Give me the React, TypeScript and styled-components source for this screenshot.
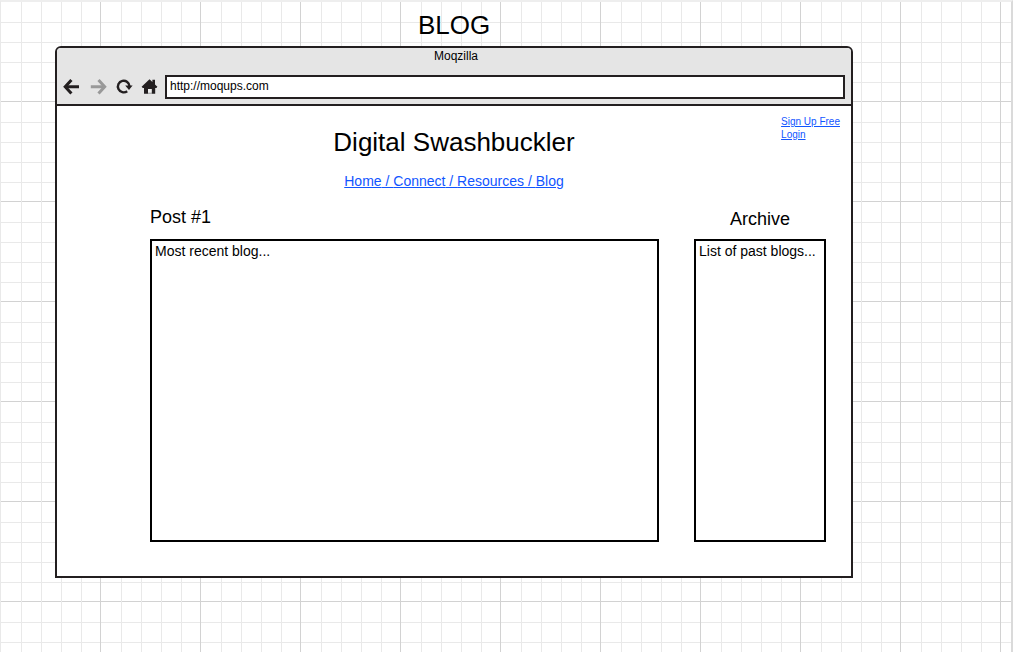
import React from "react";
import styled, { createGlobalStyle } from "styled-components";

const ink = "#231f20";
const minor = "#e9e9e9";
const major = "#d2d2d2";
const stops = `${major} 0 1px, transparent 1px 21px, ${minor} 21px 22px, transparent 22px 41px, ${minor} 41px 42px, transparent 42px 61px, ${minor} 61px 62px, transparent 62px 81px, ${minor} 81px 82px, transparent 82px 100px`;

const GlobalStyle = createGlobalStyle`
  *, *::before, *::after { box-sizing: border-box; }
  body {
    margin: 0;
    background: #fff;
    color: #000;
    font-family: "Liberation Sans", Arial, Helvetica, sans-serif;
  }
`;

const Canvas = styled.div`
  min-height: 100vh;
  padding: 8px 158px 74px 54px;
  border-top: 2px solid #eeeeee;
  border-left: 1px solid ${minor};
  border-right: 2px solid #dadada;
  background-image: linear-gradient(to right, ${stops}), linear-gradient(to bottom, ${stops});
  background-size: 100px 100px;
  background-position: 0 1px;
  background-origin: border-box;
`;

const PageLabel = styled.h1`
  margin: 0 0 6px;
  font-size: 26px;
  line-height: 30px;
  font-weight: 400;
  text-align: center;
`;

const BrowserWindow = styled.div`
  border: 2px solid ${ink};
  border-radius: 6px 6px 0 0;
  background: #fff;
  overflow: hidden;
`;

const Chrome = styled.div`
  padding: 1px 6px 5px;
  border-bottom: 2px solid ${ink};
  background: #e5e5e5;
`;

const WindowTitle = styled.div`
  margin-bottom: 12px;
  font-size: 12px;
  line-height: 14px;
  text-align: center;
  padding-left: 4px;
`;

const Toolbar = styled.div`
  display: flex;
  align-items: center;
  gap: 8px;
`;

const ToolButton = styled.button<{ $dim?: boolean }>`
  flex: none;
  width: 18px;
  height: 18px;
  padding: 0;
  border: 0;
  background: none;
  color: ${(p) => (p.$dim ? "#999999" : ink)};

  svg {
    display: block;
  }
`;

const Address = styled.input`
  flex: 1;
  min-width: 0;
  height: 24px;
  margin-left: -2px;
  padding: 0 3px 2px;
  border: 2px solid ${ink};
  border-radius: 0;
  background: #fff;
  color: #000;
  font: 12px/14px "Liberation Sans", Arial, Helvetica, sans-serif;
  outline: none;
`;

const SiteHeader = styled.header`
  display: grid;
  grid-template-columns: 1fr auto 1fr;
  padding: 9px 11px 18px;
`;

const Masthead = styled.div`
  grid-column: 2;
  margin-top: 12px;
  text-align: center;
`;

const SiteTitle = styled.h2`
  margin: 0 0 16px;
  font-size: 26px;
  line-height: 30px;
  font-weight: 400;
`;

const SiteNav = styled.nav`
  color: #1155ff;
  font-size: 14px;
  line-height: 16px;
  text-decoration: underline;
`;

const NavLink = styled.a`
  color: inherit;
  text-decoration: none;
`;

const Account = styled.div`
  justify-self: end;
  display: flex;
  flex-direction: column;
  align-items: flex-start;
`;

const AccountLink = styled.a`
  color: #1155ff;
  font-size: 10px;
  line-height: 13px;
`;

const Columns = styled.main`
  display: grid;
  grid-template-columns: 1fr 132px;
  align-items: end;
  gap: 35px;
  padding: 0 25px 34px 93px;
`;

const SectionTitle = styled.h3<{ $centered?: boolean }>`
  margin: 0 0 ${(p) => (p.$centered ? 10 : 12)}px;
  font-size: 18px;
  line-height: 20px;
  font-weight: 400;
  text-align: ${(p) => (p.$centered ? "center" : "left")};
`;

const Panel = styled.div`
  min-height: 303px;
  padding: 2px 3px;
  border: 2px solid #000;
  font-size: 14px;
  line-height: 16px;
`;

const navItems = ["Home", "Connect", "Resources", "Blog"];

const BackIcon = () => (
  <svg width="18" height="18" viewBox="0 0 18 18" fill="none" stroke="currentColor" strokeWidth="3">
    <path d="M16 8.8H2.8" />
    <path d="M8.4 2 2.2 8.8l6.2 6.8" />
  </svg>
);

const ForwardIcon = () => (
  <svg width="18" height="18" viewBox="0 0 18 18" fill="none" stroke="currentColor" strokeWidth="3">
    <path d="M1.8 8.8h13.4" />
    <path d="m9.5 2 6.2 6.8-6.2 6.8" />
  </svg>
);

const ReloadIcon = () => (
  <svg width="18" height="18" viewBox="0 0 18 18" fill="none" stroke="currentColor" strokeWidth="2.4">
    <path d="M12.2 13.2A5.8 5.8 0 1 1 14.5 8.4" />
    <path d="M10.2 7.6h7.4L14 12z" fill="currentColor" stroke="none" />
  </svg>
);

const HomeIcon = () => (
  <svg width="18" height="18" viewBox="0 0 18 18" fill="currentColor">
    <path d="M8.5 1.3 11.4 4V1.8h2.6v4.6L16.4 8.7 15.4 9.9H14.2V15.8H10.6V11H7V15.8H3V9.9H1.8L.6 8.7z" />
    <path d="M7 14.6h3.6v1.2H7z" fill="#999999" />
    <path d="M7 11h3.6v3.6H7z" fill="#eeeeee" />
  </svg>
);

export default function App() {
  return (
    <>
      <GlobalStyle />
      <Canvas>
        <PageLabel>BLOG</PageLabel>
        <BrowserWindow>
          <Chrome>
            <WindowTitle>Moqzilla</WindowTitle>
            <Toolbar>
              <ToolButton type="button" aria-label="Back">
                <BackIcon />
              </ToolButton>
              <ToolButton type="button" aria-label="Forward" $dim>
                <ForwardIcon />
              </ToolButton>
              <ToolButton type="button" aria-label="Reload">
                <ReloadIcon />
              </ToolButton>
              <ToolButton type="button" aria-label="Home">
                <HomeIcon />
              </ToolButton>
              <Address type="text" aria-label="Address" defaultValue="http://moqups.com" />
            </Toolbar>
          </Chrome>
          <SiteHeader>
            <Masthead>
              <SiteTitle>Digital Swashbuckler</SiteTitle>
              <SiteNav>
                {navItems.map((item, i) => (
                  <React.Fragment key={item}>
                    {i > 0 && " / "}
                    <NavLink href="#">{item}</NavLink>
                  </React.Fragment>
                ))}
              </SiteNav>
            </Masthead>
            <Account>
              <AccountLink href="#">Sign Up Free</AccountLink>
              <AccountLink href="#">Login</AccountLink>
            </Account>
          </SiteHeader>
          <Columns>
            <section>
              <SectionTitle>Post #1</SectionTitle>
              <Panel>Most recent blog...</Panel>
            </section>
            <aside>
              <SectionTitle $centered>Archive</SectionTitle>
              <Panel>List of past blogs...</Panel>
            </aside>
          </Columns>
        </BrowserWindow>
      </Canvas>
    </>
  );
}
